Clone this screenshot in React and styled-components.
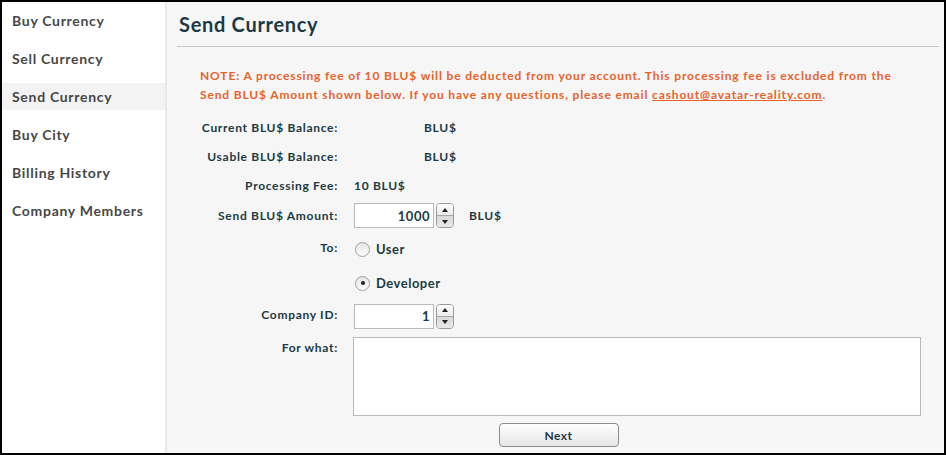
import styled, { createGlobalStyle } from "styled-components";

const GlobalStyle = createGlobalStyle`
  html, body {
    margin: 0;
    padding: 0;
    background: #000;
  }
  * {
    box-sizing: border-box;
  }
`;

const ink = "#1d3a44";
const orange = "#e8622c";

const Frame = styled.div`
  width: 946px;
  height: 455px;
  border: 2px solid #000;
  display: flex;
  background: #fff;
  font-family: Lato, "Open Sans", sans-serif;
  overflow: hidden;
`;

const Sidebar = styled.nav`
  width: 165px;
  flex-shrink: 0;
  background: #fff;
  border-right: 2px solid #e8e8e8;
  display: flex;
  flex-direction: column;
  gap: 11px;
  padding-top: 5px;
`;

const NavItem = styled.div`
  height: 27px;
  display: flex;
  align-items: center;
  padding-left: 10px;
  font-size: 14px;
  font-weight: 700;
  letter-spacing: 0.7px;
  color: #474747;
  background: ${(p) => (p.$active ? "#f3f3f3" : "transparent")};
`;

const Main = styled.main`
  flex: 1;
  background: #f6f6f6;
  padding: 0 5px 0 10px;
  display: flex;
  flex-direction: column;
`;

const Header = styled.header`
  height: 45px;
  border-bottom: 1px solid #c9c9c9;
  display: flex;
  align-items: center;
  padding-left: 2px;
`;

const Title = styled.h1`
  margin: 0;
  font-size: 20px;
  font-weight: 700;
  color: ${ink};
  letter-spacing: 0.7px;
`;

const Note = styled.p`
  margin: 19px 0 0 23px;
  font-size: 12px;
  line-height: 19px;
  font-weight: 700;
  color: ${orange};
  letter-spacing: 0.85px;
  width: 700px;

  a {
    color: ${orange};
    text-decoration: underline;
  }
`;

const Form = styled.form`
  margin: 9px 0 0 23px;
  width: 721px;
  display: flex;
  flex-direction: column;
`;

const Row = styled.div`
  display: grid;
  grid-template-columns: 138px 1fr;
  column-gap: 16px;
  align-items: ${(p) => (p.$top ? "start" : "center")};
  height: ${(p) => p.$h}px;
  margin-top: ${(p) => p.$mt || 0}px;
`;

const Label = styled.label`
  text-align: right;
  white-space: nowrap;
  font-size: 12px;
  font-weight: 700;
  color: ${ink};
  letter-spacing: 0.7px;
  padding-top: ${(p) => p.$pt || 0}px;
  margin-top: ${(p) => p.$shift || 0}px;
`;

const Value = styled.div`
  display: flex;
  align-items: center;
  font-size: 12px;
  font-weight: 700;
  color: ${ink};
  letter-spacing: 0.7px;
`;

const Blank = styled.span`
  display: inline-block;
  width: 70px;
`;

const Unit = styled.span`
  margin-left: ${(p) => p.$ml || 0}px;
`;

const NumberBox = styled.div`
  width: 80px;
  height: 25px;
  background: #fff;
  border: 1px solid #b9b9b9;
  display: flex;
  align-items: center;
  justify-content: flex-end;
  padding-right: 3px;
  font-size: 13px;
  font-weight: 700;
  letter-spacing: 0.5px;
  color: ${ink};
`;

const Spinner = styled.div`
  width: 18px;
  height: 25px;
  margin-left: 2px;
  border: 1px solid #9a9a9a;
  border-radius: 4px;
  display: flex;
  flex-direction: column;
  overflow: hidden;
`;

const SpinHalf = styled.span`
  flex: 1;
  display: flex;
  align-items: center;
  justify-content: center;
  background: ${(p) =>
    p.$down
      ? "linear-gradient(#d8d8d8, #e9e9e9)"
      : "linear-gradient(#fdfdfd, #ececec)"};
  border-top: ${(p) => (p.$down ? "1px solid #a8a8a8" : "none")};

  &::after {
    content: "";
    border-left: 3px solid transparent;
    border-right: 3px solid transparent;
    ${(p) =>
      p.$down
        ? "border-top: 4px solid #222;"
        : "border-bottom: 4px solid #222;"}
  }
`;

const Radio = styled.span`
  width: 15px;
  height: 15px;
  border-radius: 50%;
  border: 1px solid #a0a0a0;
  background: linear-gradient(#e6e6e6, #fcfcfc);
  display: inline-flex;
  align-items: center;
  justify-content: center;
  margin: 0 6px 0 1px;

  &::after {
    content: "";
    width: 4px;
    height: 4px;
    border-radius: 50%;
    background: ${(p) => (p.$checked ? "#222" : "transparent")};
  }
`;

const RadioText = styled.span`
  font-size: 13px;
  font-weight: 700;
  color: ${ink};
  letter-spacing: 0.5px;
`;

const TextArea = styled.div`
  width: 568px;
  height: 79px;
  margin-left: -1px;
  background: #fff;
  border: 1px solid #b9b9b9;
`;

const Actions = styled.div`
  display: flex;
  justify-content: center;
  margin-top: 7px;
  padding-right: 4px;
`;

const Button = styled.button`
  width: 120px;
  height: 24px;
  border: 1px solid #8c8c8c;
  border-radius: 4px;
  background: linear-gradient(#fefefe, #e6e6e6);
  font-family: Lato, "Open Sans", sans-serif;
  font-size: 12px;
  font-weight: 700;
  letter-spacing: 0.5px;
  color: ${ink};
  padding: 0;
`;

function NumberField({ value }) {
  return (
    <>
      <NumberBox>{value}</NumberBox>
      <Spinner>
        <SpinHalf />
        <SpinHalf $down />
      </Spinner>
    </>
  );
}

const menu = [
  "Buy Currency",
  "Sell Currency",
  "Send Currency",
  "Buy City",
  "Billing History",
  "Company Members",
];

export default function App() {
  return (
    <>
      <GlobalStyle />
      <Frame>
        <Sidebar>
          {menu.map((item) => (
            <NavItem key={item} $active={item === "Send Currency"}>
              {item}
            </NavItem>
          ))}
        </Sidebar>
        <Main>
          <Header>
            <Title>Send Currency</Title>
          </Header>
          <Note>
            NOTE: A processing fee of 10 BLU$ will be deducted from your
            account. This processing fee is excluded from the Send BLU$ Amount
            shown below. If you have any questions, please email{" "}
            <a href="#">cashout@avatar-reality.com</a>.
          </Note>
          <Form>
            <Row $h={29}>
              <Label>Current BLU$ Balance:</Label>
              <Value>
                <Blank />
                <Unit>BLU$</Unit>
              </Value>
            </Row>
            <Row $h={29}>
              <Label>Usable BLU$ Balance:</Label>
              <Value>
                <Blank />
                <Unit>BLU$</Unit>
              </Value>
            </Row>
            <Row $h={29}>
              <Label>Processing Fee:</Label>
              <Value>10 BLU$</Value>
            </Row>
            <Row $h={31}>
              <Label>Send BLU$ Amount:</Label>
              <Value>
                <NumberField value="1000" />
                <Unit $ml={15}>BLU$</Unit>
              </Value>
            </Row>
            <Row $h={36}>
              <Label $shift={-4}>To:</Label>
              <Value>
                <Radio />
                <RadioText>User</RadioText>
              </Value>
            </Row>
            <Row $h={32}>
              <span />
              <Value>
                <Radio $checked />
                <RadioText>Developer</RadioText>
              </Value>
            </Row>
            <Row $h={34}>
              <Label $shift={-4}>Company ID:</Label>
              <Value>
                <NumberField value="1" />
              </Value>
            </Row>
            <Row $h={79} $mt={4} $top>
              <Label $pt={3}>For what:</Label>
              <TextArea />
            </Row>
            <Actions>
              <Button type="button">Next</Button>
            </Actions>
          </Form>
        </Main>
      </Frame>
    </>
  );
}
